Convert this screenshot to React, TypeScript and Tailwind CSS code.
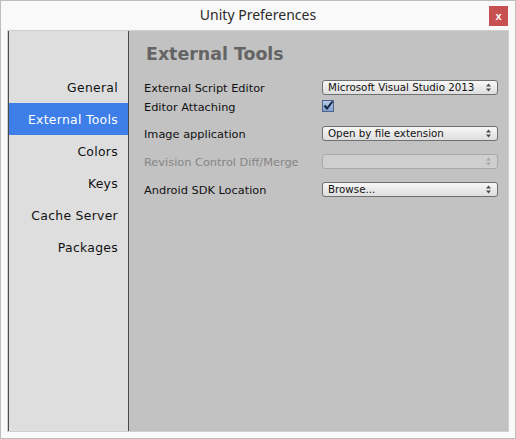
const sideItems = ['General', 'External Tools', 'Colors', 'Keys', 'Cache Server', 'Packages']

const UpDown = ({ disabled }: { disabled?: boolean }) => (
  <svg width="5" height="9" viewBox="0 0 5 9" className="shrink-0">
    <path d="M2.5 0.5 L5 3.5 L0 3.5 Z" fill={disabled ? '#a8a8a8' : '#4a4a4a'} />
    <path d="M0 5.5 L5 5.5 L2.5 8.5 Z" fill={disabled ? '#a8a8a8' : '#4a4a4a'} />
  </svg>
)

const Dropdown = ({ value, disabled }: { value?: string; disabled?: boolean }) => (
  <div
    className={
      disabled
        ? 'flex h-[15px] w-[176px] items-center justify-between rounded-[3px] border border-[#a9a9a9] bg-[#cfcfcf] pl-[5px] pr-[6px]'
        : 'flex h-[15px] w-[176px] items-center justify-between rounded-[3px] border border-[#707070] bg-gradient-to-b from-[#f7f7f7] to-[#dedede] pl-[5px] pr-[6px]'
    }
  >
    <span className="text-[10.3px] leading-[13px] text-[#111]">{value}</span>
    <UpDown disabled={disabled} />
  </div>
)

const Checkbox = () => (
  <svg width="12" height="12" viewBox="0 0 12 12">
    <defs>
      <linearGradient id="cbg" x1="0" y1="0" x2="0" y2="1">
        <stop offset="0" stopColor="#b7cbe8" />
        <stop offset="1" stopColor="#7f9fcf" />
      </linearGradient>
    </defs>
    <rect x="0.5" y="0.5" width="11" height="11" fill="url(#cbg)" stroke="#4d6487" />
    <path d="M2.5 5.5 L5 8.5 L10.5 1.5" fill="none" stroke="#13233f" strokeWidth="2" />
  </svg>
)

const Label = ({ text, muted }: { text: string; muted?: boolean }) => (
  <span
    className={
      muted
        ? 'w-[178px] pt-[1px] text-[11.35px] leading-[14px] text-[#858585]'
        : 'w-[178px] pt-[1px] text-[11.35px] leading-[14px] text-[#111]'
    }
  >
    {text}
  </span>
)

export default function App() {
  return (
    <div className="flex h-[439px] w-[516px] flex-col border border-[#bdbdbd] bg-[#f9f9f9] font-['DejaVu_Sans',sans-serif]">
      <div className="flex h-[29px] shrink-0">
        <div className="w-[26px]" />
        <div className="flex-1 pt-[4px] text-center font-['Noto_Sans',sans-serif] text-[14px] leading-[20px] text-[#2b2b2b]">
          Unity Preferences
        </div>
        <div className="w-[26px] pt-[5px]">
          <div className="flex h-[20px] w-[19px] items-center justify-center bg-[#c75050] font-['Liberation_Sans',sans-serif] text-[11px] font-bold leading-none text-white">
            x
          </div>
        </div>
      </div>

      <div className="mx-[6px] flex h-[402px] border border-[#cfcfcf]">
        <div className="flex w-[121px] flex-col border-x border-[#4a4a4a] bg-[#dedede] pt-[40px]">
          {sideItems.map((item) => (
            <div
              key={item}
              className={
                item === 'External Tools'
                  ? 'flex h-[32px] items-center justify-end bg-[#3d7ee8] pr-[10px] pt-[2px] text-[12.4px] tracking-[0.3px] text-white'
                  : 'flex h-[32px] items-center justify-end pr-[10px] pt-[2px] text-[12.4px] tracking-[0.3px] text-[#111]'
              }
            >
              {item}
            </div>
          ))}
        </div>

        <div className="flex flex-1 flex-col bg-[#c2c2c2] pl-[15px]">
          <div className="pl-[2px] pt-[13px] text-[17.4px] font-bold leading-[20px] text-[#646464]">External Tools</div>

          <div className="mt-[16px] flex h-[15px] items-center">
            <Label text="External Script Editor" />
            <Dropdown value="Microsoft Visual Studio 2013" />
          </div>
          <div className="mt-[5px] flex h-[12px] items-center">
            <Label text="Editor Attaching" />
            <Checkbox />
          </div>
          <div className="mt-[14px] flex h-[15px] items-center">
            <Label text="Image application" />
            <Dropdown value="Open by file extension" />
          </div>
          <div className="mt-[13px] flex h-[15px] items-center">
            <Label text="Revision Control Diff/Merge" muted />
            <Dropdown disabled />
          </div>
          <div className="mt-[13px] flex h-[15px] items-center">
            <Label text="Android SDK Location" />
            <Dropdown value="Browse..." />
          </div>
        </div>
      </div>
    </div>
  )
}
